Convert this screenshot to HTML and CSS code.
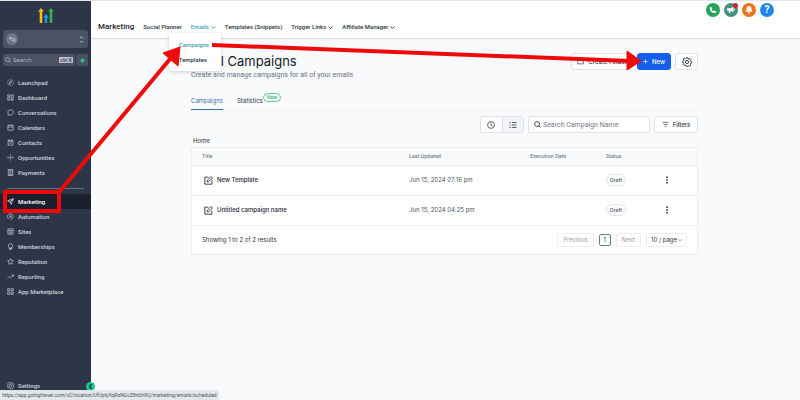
FILE: index.html
```html
<!DOCTYPE html>
<html lang="en">
<head>
    <meta charset="UTF-8">
    <meta name="viewport" content="width=device-width, initial-scale=1.0">
    <title>Email Campaigns</title>
    <link rel="stylesheet" href="styles.css">
</head>
<body>
    <!-- Icon definitions -->
    <svg class="sprite" aria-hidden="true">
        <symbol id="i-rocket" viewBox="0 0 16 16"><circle cx="8" cy="8" r="7" stroke-opacity=".5"/><path d="M5 11l1-4c1-2 3-3 5-2 0 2-1 4-3 5zM5 11l-1 1"/></symbol>
        <symbol id="i-dash" viewBox="0 0 16 16"><path d="M1.500 2h5v4h-5zM9.500 2h5v7h-5zM1.500 9h5v5h-5zM9.500 12h5v2h-5z"/></symbol>
        <symbol id="i-chat" viewBox="0 0 16 16"><path d="M2 14l1-3a6.200 6.200 0 1 1 3 2.500z"/></symbol>
        <symbol id="i-calendar" viewBox="0 0 16 16"><path d="M2 3h12v11H2zM2 7h12M5 1v3M11 1v3"/></symbol>
        <symbol id="i-contact" viewBox="0 0 16 16"><path d="M2.500 3h11v11h-11zM2.500 6h11M5 1v3M11 1v3M6 10h4"/></symbol>
        <symbol id="i-opp" viewBox="0 0 16 16"><circle cx="8" cy="8" r="1.500"/><path d="M8 1v3M8 12v3M2.500 5v6M13.500 5v6M4.500 8h1M10.500 8h1"/></symbol>
        <symbol id="i-swap" viewBox="0 0 16 16"><path d="M2 8V3.500h4M3 4l4 4v4M9 6h4v7M10 10l3 3"/></symbol>
        <symbol id="i-pay" viewBox="0 0 16 16"><path d="M3 2h10v12H3zM1.500 2h13M1.500 14h13M10 5.500H7.500a1.200 1.200 0 0 0 0 2.500h1a1.200 1.200 0 0 1 0 2.500H6"/></symbol>
        <symbol id="i-send" viewBox="0 0 16 16"><path d="M14.500 1.500L1.500 6.500l5.500 2.500 2.500 5.500zM14.500 1.500L7 9"/></symbol>
        <symbol id="i-auto" viewBox="0 0 16 16"><path d="M4 13.500A6.500 6.500 0 1 1 8 14.500M6.500 5.500v5l4-2.500z"/></symbol>
        <symbol id="i-site" viewBox="0 0 16 16"><path d="M2 2h12v12H2zM2 5.500h12M6 8.500h4v3H6z"/></symbol>
        <symbol id="i-member" viewBox="0 0 16 16"><circle cx="8" cy="6.500" r="5"/><path d="M5 11v3.500h6V11M6.500 12.500h3"/></symbol>
        <symbol id="i-star" viewBox="0 0 16 16"><path d="M8 1.500l2 4.300 4.700.6-3.500 3.200.9 4.700L8 12l-4.100 2.300.9-4.700L1.300 6.400 6 5.800z"/></symbol>
        <symbol id="i-trend" viewBox="0 0 16 16"><path d="M1 12l4-4 3.500 3L15 4.500M10.500 4.500H15V9"/></symbol>
        <symbol id="i-apps" viewBox="0 0 16 16"><path d="M1.500 1.500h5v5h-5zM9.500 1.500h5v5h-5zM1.500 9.500h5v5h-5zM9.500 9.500h5v5h-5z"/></symbol>
        <symbol id="i-gear" viewBox="0 0 16 16"><path stroke-linejoin="round" d="M6.800 1h2.400l.5 2 1.300.6 1.900-1 1.600 1.700-1 1.800.5 1.100 1.500.6v2l-1.700.6-.5 1.200.9 1.800-1.700 1.600-1.800-.9-1.200.5L9.200 15H6.800l-.5-1.900-1.200-.5-1.900.9-1.600-1.700.9-1.700-.5-1.200L1 9V7l1.500-.8.5-1.200-.9-1.700 1.600-1.700 1.700 1 1-.5z"/><circle cx="8" cy="8" r="2.500"/></symbol>
        <symbol id="i-search" viewBox="0 0 16 16"><circle cx="7" cy="7" r="5.500"/><path d="M11 11l4 4"/></symbol>
        <symbol id="i-down" viewBox="0 0 16 16"><path d="M2 5l6 6 6-6"/></symbol>
        <symbol id="i-updown" viewBox="0 0 16 16"><path d="M4.500 5L8 1.500 11.500 5M4.500 11L8 14.500 11.500 11"/></symbol>
        <symbol id="i-clock" viewBox="0 0 16 16"><circle cx="8" cy="8" r="6.800"/><path d="M8 4v4.500l3 1.500"/></symbol>
        <symbol id="i-list" viewBox="0 0 16 16"><path d="M6 3h9M6 8h9M6 13h9M1 3h2.500M1 8h2.500M1 13h2.500"/></symbol>
        <symbol id="i-filter" viewBox="0 0 16 16"><path d="M1 3h14M3.500 8h9M6 13h4"/></symbol>
        <symbol id="i-folder" viewBox="0 0 16 16"><path d="M1.500 2.500h5l1.500 2h6.500v9h-13z"/></symbol>
        <symbol id="i-edit" viewBox="0 0 16 16"><path d="M8 2H1.500v12.500H14V8M5.500 10.500l.5-3L12.500 1l2.500 2.500L8.500 10z"/></symbol>
        <symbol id="i-plus" viewBox="0 0 16 16"><path d="M8 1v14M1 8h14"/></symbol>
        <symbol id="i-dots" viewBox="0 0 16 16"><path d="M8 1v3M8 6.500v3M8 12v3"/></symbol>
    </svg>

    <div class="app">
        <aside class="sidebar">
            <svg class="logo" viewBox="0 0 16 15">
                <path fill="#f9bc16" d="M0 3.500L3 0l3 3.500H4.300V15H1.700V3.500z"/>
                <path fill="#2196e8" d="M5.200 9.500L8 6l2.800 3.500H9.200V15H6.800V9.500z"/>
                <path fill="#35b44a" d="M10 3.500L13 0l3 3.500h-1.700V15h-2.600V3.500z"/>
            </svg>
            <button class="account" aria-label="Switch account">
                <span class="avatar"><svg class="icon"><use href="#i-swap"/></svg></span>
                <svg class="icon"><use href="#i-updown"/></svg>
            </button>
            <div class="side-search">
                <label class="search-box">
                    <svg class="icon"><use href="#i-search"/></svg>
                    <input type="text" placeholder="Search" aria-label="Search">
                    <kbd>ctrl K</kbd>
                </label>
                <button class="quick" aria-label="Quick actions"><svg class="icon"><use href="#i-plus"/></svg></button>
            </div>
            <nav class="side-nav">
                <a href="#"><svg class="icon"><use href="#i-rocket"/></svg>Launchpad</a>
                <a href="#"><svg class="icon"><use href="#i-dash"/></svg>Dashboard</a>
                <a href="#"><svg class="icon"><use href="#i-chat"/></svg>Conversations</a>
                <a href="#"><svg class="icon"><use href="#i-calendar"/></svg>Calendars</a>
                <a href="#"><svg class="icon"><use href="#i-contact"/></svg>Contacts</a>
                <a href="#"><svg class="icon"><use href="#i-opp"/></svg>Opportunities</a>
                <a href="#"><svg class="icon"><use href="#i-pay"/></svg>Payments</a>
                <hr>
                <a href="#" class="active"><svg class="icon"><use href="#i-send"/></svg>Marketing</a>
                <a href="#"><svg class="icon"><use href="#i-auto"/></svg>Automation</a>
                <a href="#"><svg class="icon"><use href="#i-site"/></svg>Sites</a>
                <a href="#"><svg class="icon"><use href="#i-member"/></svg>Memberships</a>
                <a href="#"><svg class="icon"><use href="#i-star"/></svg>Reputation</a>
                <a href="#"><svg class="icon"><use href="#i-trend"/></svg>Reporting</a>
                <a href="#"><svg class="icon"><use href="#i-apps"/></svg>App Marketplace</a>
                <a href="#" class="settings"><svg class="icon"><use href="#i-gear"/></svg>Settings</a>
            </nav>
            <button class="collapse" aria-label="Collapse sidebar"><svg viewBox="0 0 16 16"><path d="M10 4L6 8l4 4"/></svg></button>
        </aside>

        <div class="page">
            <header class="topbar">
                <div class="quick-links">
                    <button class="round phone" aria-label="Phone"><svg viewBox="0 0 16 16"><path fill="#fff" d="M4 1.500l2.500 3-1.200 1.800c.9 1.700 2.200 3 4 3.900L11 8.800l3.500 2.300c-.3 2-1.500 3-3.200 3C6 14 1.900 9.900 1.500 4.800c0-1.800.8-3 2.500-3.300z"/></svg></button>
                    <button class="round news" aria-label="Announcements"><svg viewBox="0 0 16 16"><path fill="#fff" d="M0 4.500h7l6-3v11l-6-3V14H3.500V9.500H0zM14 5.500h2v3h-2z"/></svg></button>
                    <button class="round alerts" aria-label="Notifications"><svg viewBox="0 0 16 16"><path fill="#fff" d="M8 0c3.500 0 5 2.500 5 5.500 0 3 1 4.500 2.500 6H.5C2 10 3 8.500 3 5.500 3 2.500 4.500 0 8 0zM5.500 12.500h5a2.500 2.500 0 0 1-5 0z"/></svg></button>
                    <button class="round help" aria-label="Help">?</button>
                </div>
                <div class="menu-row">
                    <strong>Marketing</strong>
                    <nav class="menu">
                        <a href="#">Social Planner</a>
                        <div class="has-menu">
                            <a href="#" class="active">Emails<svg class="icon"><use href="#i-down"/></svg></a>
                            <div class="dropdown">
                                <a href="#" class="active">Campaigns</a>
                                <a href="#">Templates</a>
                            </div>
                        </div>
                        <a href="#">Templates (Snippets)</a>
                        <a href="#">Trigger Links<svg class="icon"><use href="#i-down"/></svg></a>
                        <a href="#">Affiliate Manager<svg class="icon"><use href="#i-down"/></svg></a>
                    </nav>
                </div>
            </header>

            <main class="content">
                <div class="heading">
                    <div>
                        <h1>Email Campaigns</h1>
                        <p>Create and manage campaigns for all of your emails</p>
                    </div>
                    <div class="actions">
                        <button class="btn"><svg class="icon"><use href="#i-folder"/></svg>Create Folder</button>
                        <button class="btn primary"><svg class="icon"><use href="#i-plus"/></svg>New</button>
                        <button class="btn gear" aria-label="Settings"><svg class="icon"><use href="#i-gear"/></svg></button>
                    </div>
                </div>

                <nav class="tabs">
                    <a href="#" class="active">Campaigns</a>
                    <a href="#">Statistics<span class="badge">New</span></a>
                </nav>

                <div class="toolbar">
                    <div class="toggle">
                        <button aria-label="Recent"><svg class="icon"><use href="#i-clock"/></svg></button>
                        <button class="on" aria-label="List"><svg class="icon"><use href="#i-list"/></svg></button>
                    </div>
                    <label class="search">
                        <svg class="icon"><use href="#i-search"/></svg>
                        <input type="text" placeholder="Search Campaign Name" aria-label="Search Campaign Name">
                    </label>
                    <button class="btn filters"><svg class="icon"><use href="#i-filter"/></svg>Filters</button>
                </div>

                <a href="#" class="crumb">Home</a>
                <div class="card">
                    <table>
                        <thead>
                            <tr><th class="title">Title</th><th class="updated">Last Updated</th><th class="execution">Execution Date</th><th class="status">Status</th><th></th></tr>
                        </thead>
                        <tbody>
                            <tr>
                                <td class="name"><svg class="icon"><use href="#i-edit"/></svg>New Template</td>
                                <td>Jun 15, 2024 07:16 pm</td>
                                <td></td>
                                <td><span class="tag">Draft</span></td>
                                <td><button class="more" aria-label="More"><svg class="icon"><use href="#i-dots"/></svg></button></td>
                            </tr>
                            <tr>
                                <td class="name"><svg class="icon"><use href="#i-edit"/></svg>Untitled campaign name</td>
                                <td>Jun 15, 2024 04:25 pm</td>
                                <td></td>
                                <td><span class="tag">Draft</span></td>
                                <td><button class="more" aria-label="More"><svg class="icon"><use href="#i-dots"/></svg></button></td>
                            </tr>
                        </tbody>
                    </table>
                    <div class="pager">
                        <span>Showing 1 to 2 of 2 results</span>
                        <button class="step">Previous</button>
                        <button class="current">1</button>
                        <button class="step next">Next</button>
                        <label class="per-page">
                            <select aria-label="Rows per page"><option>10 / page</option></select>
                            <svg class="icon"><use href="#i-down"/></svg>
                        </label>
                    </div>
                </div>
            </main>
        </div>
    </div>

    <!-- Walkthrough arrows drawn over the page -->
    <svg class="guide" viewBox="0 0 800 400" aria-hidden="true">
        <rect x="5" y="192" width="54" height="19"/>
        <path d="M60 191L170 59M212 45L630 61"/>
        <path class="head" d="M180 47L163 53L178 66zM641 61L627 51L627 70z"/>
    </svg>
    <div class="link-status">https://app.gohighlevel.com/v2/location/UfUptyXqRsNGcZ8n6hXQ/marketing/emails/scheduled</div>
</body>
</html>
```

FILE: styles.css
```css
* {
    box-sizing: border-box;
}
body {
    margin: 0;
    font-family: Roboto, Arial, sans-serif;
    font-size: 6px;
    line-height: 8px;
    color: #2a3342;
    background: #f9fafc;
}
a {
    color: inherit;
    text-decoration: none;
}
button, input, select {
    font: inherit;
    color: inherit;
    margin: 0;
    padding: 0;
    border: 0;
    background: none;
}
input {
    width: 100%;
    min-width: 0;
    outline: none;
}
.sprite {
    position: absolute;
    width: 0;
    height: 0;
}
.icon {
    width: 7px;
    height: 7px;
    flex: none;
    fill: none;
    stroke: currentColor;
    stroke-width: 2;
}
.app {
    display: flex;
    min-height: 100vh;
    border-top: 1px solid #e4e6ea;
}

/* Sidebar */
.sidebar {
    position: relative;
    flex: none;
    width: 91px;
    display: flex;
    flex-direction: column;
    padding-top: 7px;
    background: #2d3648;
    color: #ccd2dc;
}
.logo {
    width: 16px;
    height: 15px;
    margin: 0 auto 7px;
}
.account {
    display: flex;
    align-items: center;
    justify-content: space-between;
    height: 18px;
    margin: 0 3px 6px;
    padding: 0 3px;
    border-radius: 3px;
    background: #4a5364;
}
.avatar {
    display: flex;
    align-items: center;
    justify-content: center;
    width: 12px;
    height: 12px;
    border-radius: 50%;
    background: #6d7482;
}
.side-search {
    display: flex;
    gap: 1px;
    margin: 0 3px 9px;
}
.search-box, .quick {
    display: flex;
    align-items: center;
    height: 12px;
    border-radius: 2px;
    background: #4a5364;
}
.search-box {
    flex: 1;
    gap: 2px;
    padding: 0 2px;
    color: #aab1be;
}
.search-box .icon {
    width: 6px;
    height: 6px;
}
.search-box input::placeholder {
    color: #aab1be;
    opacity: 1;
}
kbd {
    flex: none;
    padding: 0 1px;
    font: 500 5px/6px Roboto, sans-serif;
    color: #2d3648;
    background: #c3bccd;
}
.quick {
    width: 12px;
    justify-content: center;
    color: #37ca85;
}
.quick .icon {
    width: 5px;
    height: 5px;
    stroke-width: 5;
}
.side-nav {
    flex: 1;
    display: flex;
    flex-direction: column;
    padding-bottom: 7px;
    font-weight: 500;
}
.side-nav a {
    display: flex;
    align-items: center;
    gap: 4px;
    height: 15px;
    padding-left: 7px;
}
.side-nav .icon {
    stroke-width: 1.5;
}
.side-nav .active {
    color: #fff;
    background: #1b202e;
}
.side-nav hr {
    width: 77px;
    height: 1px;
    margin: 8px auto 5px;
    border: 0;
    background: #6a7280;
}
.side-nav .settings {
    margin-top: auto;
}
.collapse {
    position: absolute;
    right: -4px;
    bottom: 9px;
    width: 9px;
    height: 9px;
    border-radius: 50%;
    background: #22c58b;
}
.collapse svg {
    display: block;
    fill: none;
    stroke: #123;
    stroke-width: 2;
}

/* Top bar */
.page {
    flex: 1;
    min-width: 0;
}
.topbar {
    height: 37px;
    padding: 2px 26px 0 7px;
    background: #fff;
    box-shadow: 0 1px 1px #d9dce1;
}
.quick-links {
    display: flex;
    justify-content: flex-end;
    gap: 4px;
}
.round {
    position: relative;
    width: 14px;
    height: 14px;
    padding: 3px;
    border-radius: 50%;
    font-size: 10px;
    font-weight: 700;
    line-height: 8px;
    color: #fff;
}
.round svg {
    display: block;
}
.phone {
    background: #27a35c;
}
.news {
    background: #45907f;
}
.news::after {
    content: "";
    position: absolute;
    top: 0;
    right: 0;
    width: 5px;
    height: 5px;
    border-radius: 50%;
    background: #d6202f;
}
.alerts {
    background: #f0711c;
}
.help {
    background: #1f86e5;
}
.menu-row {
    display: flex;
    align-items: center;
    height: 20px;
}
.menu-row strong {
    margin-right: 9px;
    font-size: 8px;
    font-weight: 500;
    color: #1d2433;
}
.menu {
    display: flex;
    gap: 9px;
    font-weight: 500;
}
.menu a {
    display: flex;
    align-items: center;
    gap: 2px;
}
.menu .icon {
    width: 5px;
    height: 5px;
    stroke-width: 3;
}
.menu .active {
    color: #3e9fb3;
}
.has-menu {
    position: relative;
}
.dropdown {
    position: absolute;
    top: 10px;
    left: -22px;
    z-index: 2;
    width: 52px;
    padding: 4px 10px;
    background: #fff;
    box-shadow: 0 1px 4px rgba(0, 0, 0, 0.18);
}
.dropdown a {
    height: 15px;
}

/* Campaign list */
.content {
    padding: 15px 102px 0 100px;
    font-family: Inter, Arial, sans-serif;
}
.heading {
    display: flex;
    justify-content: space-between;
}
h1 {
    margin: 0;
    font-size: 13px;
    font-weight: 400;
    line-height: 17px;
    color: #151b28;
}
p {
    margin: 0;
    font-family: Roboto, Arial, sans-serif;
    font-size: 7px;
    line-height: 10px;
    color: #687080;
}
.actions {
    display: flex;
    gap: 4px;
}
.btn {
    display: flex;
    align-items: center;
    justify-content: center;
    gap: 4px;
    height: 17px;
    padding: 0 5px;
    border: 1px solid #dfe2e7;
    border-radius: 3px;
    background: #fff;
    font-weight: 500;
}
.btn .icon {
    stroke-width: 1.5;
}
.primary {
    border-color: #155eef;
    background: #155eef;
    color: #fff;
}
.primary .icon {
    width: 5px;
    height: 5px;
    stroke-width: 2;
}
.gear {
    width: 23px;
}
.gear .icon {
    width: 10px;
    height: 10px;
}
.tabs {
    display: flex;
    gap: 14px;
    margin-top: 13px;
    border-bottom: 1px solid #f0f2f5;
}
.tabs a {
    position: relative;
    height: 17px;
    padding-top: 4px;
}
.tabs .active {
    color: #3b6fb0;
    border-bottom: 1px solid #3b6fb0;
}
.badge {
    position: absolute;
    left: 100%;
    top: 0;
    padding: 0 3px;
    border: 1px solid #62c596;
    border-radius: 5px;
    font-size: 5px;
    line-height: 7px;
    color: #2aa56c;
    background: #effaf4;
}
.toolbar {
    display: flex;
    justify-content: flex-end;
    gap: 4px;
    margin-top: 5px;
}
.toggle {
    display: flex;
    width: 44px;
    height: 17px;
    border: 1px solid #dfe2e7;
    border-radius: 3px;
    background: #fff;
    overflow: hidden;
}
.toggle button {
    display: flex;
    flex: 1;
    align-items: center;
    justify-content: center;
}
.toggle .on {
    background: #f1f3f6;
    border-left: 1px solid #dfe2e7;
}
.toggle .icon {
    width: 8px;
    height: 8px;
    stroke-width: 1.5;
}
.search {
    display: flex;
    align-items: center;
    gap: 2px;
    width: 122px;
    height: 17px;
    padding: 0 5px;
    border: 1px solid #dfe2e7;
    border-radius: 3px;
    background: #fff;
}
.search input {
    font-family: Roboto, Arial, sans-serif;
    font-size: 7px;
}
.search input::placeholder {
    color: #747b88;
    opacity: 1;
}
.filters {
    width: 44px;
}
.crumb {
    display: block;
    margin: 4px 0 2px 2px;
}
.card {
    border: 1px solid #eceef2;
    border-radius: 2px;
    background: #fff;
}
table {
    width: 100%;
    border-collapse: collapse;
    table-layout: fixed;
}
th {
    height: 17px;
    padding: 0;
    font-size: 5px;
    font-weight: 500;
    text-align: left;
    color: #687080;
    background: #f9fafc;
}
td {
    height: 30px;
    padding: 0;
    color: #4b5362;
}
tr {
    border-bottom: 1px solid #eceef2;
}
.title {
    width: 43%;
    padding-left: 10px;
}
.updated {
    width: 24%;
}
.execution {
    width: 15%;
}
.status {
    width: 11%;
}
.name {
    padding-left: 12px;
    font-weight: 500;
    color: #1d2433;
}
.name .icon {
    width: 9px;
    height: 9px;
    margin-right: 4px;
    stroke-width: 1.5;
    vertical-align: middle;
}
.tag {
    display: inline-block;
    padding: 1px 3px;
    border: 1px solid #e2e4ea;
    border-radius: 6px;
    font-size: 5px;
    font-weight: 500;
    background: #fafbfc;
}
.more {
    display: block;
    padding-left: 1px;
    color: #151b28;
}
.more .icon {
    display: block;
    width: 8px;
    height: 8px;
    stroke-width: 3;
}
.pager {
    display: flex;
    align-items: center;
    gap: 5px;
    height: 28px;
    padding: 0 10px;
}
.pager > span {
    margin-right: auto;
}
.pager button, .per-page {
    height: 14px;
    border: 1px solid #eceef2;
    border-radius: 2px;
}
.step {
    padding: 0 5px;
    color: #9aa1ad;
}
.pager .current {
    width: 12px;
    height: 12px;
    border-color: #5b8590;
}
.per-page {
    display: flex;
    align-items: center;
    width: 41px;
    padding: 0 4px;
}
.per-page select {
    flex: 1;
    min-width: 0;
    appearance: none;
}
.per-page .icon {
    width: 4px;
    height: 4px;
}

/* Overlays */
.guide {
    position: absolute;
    top: 0;
    left: 0;
    z-index: 3;
    width: 800px;
    pointer-events: none;
    fill: none;
    stroke: #ee0a0a;
    stroke-width: 4;
}
.guide .head {
    fill: #ee0a0a;
    stroke-width: 1;
}
.link-status {
    position: fixed;
    left: 0;
    bottom: 0;
    z-index: 4;
    padding: 1px 2px;
    border-radius: 0 2px 0 0;
    font-size: 5px;
    color: #50545b;
    background: #e3e6ea;
}
```
